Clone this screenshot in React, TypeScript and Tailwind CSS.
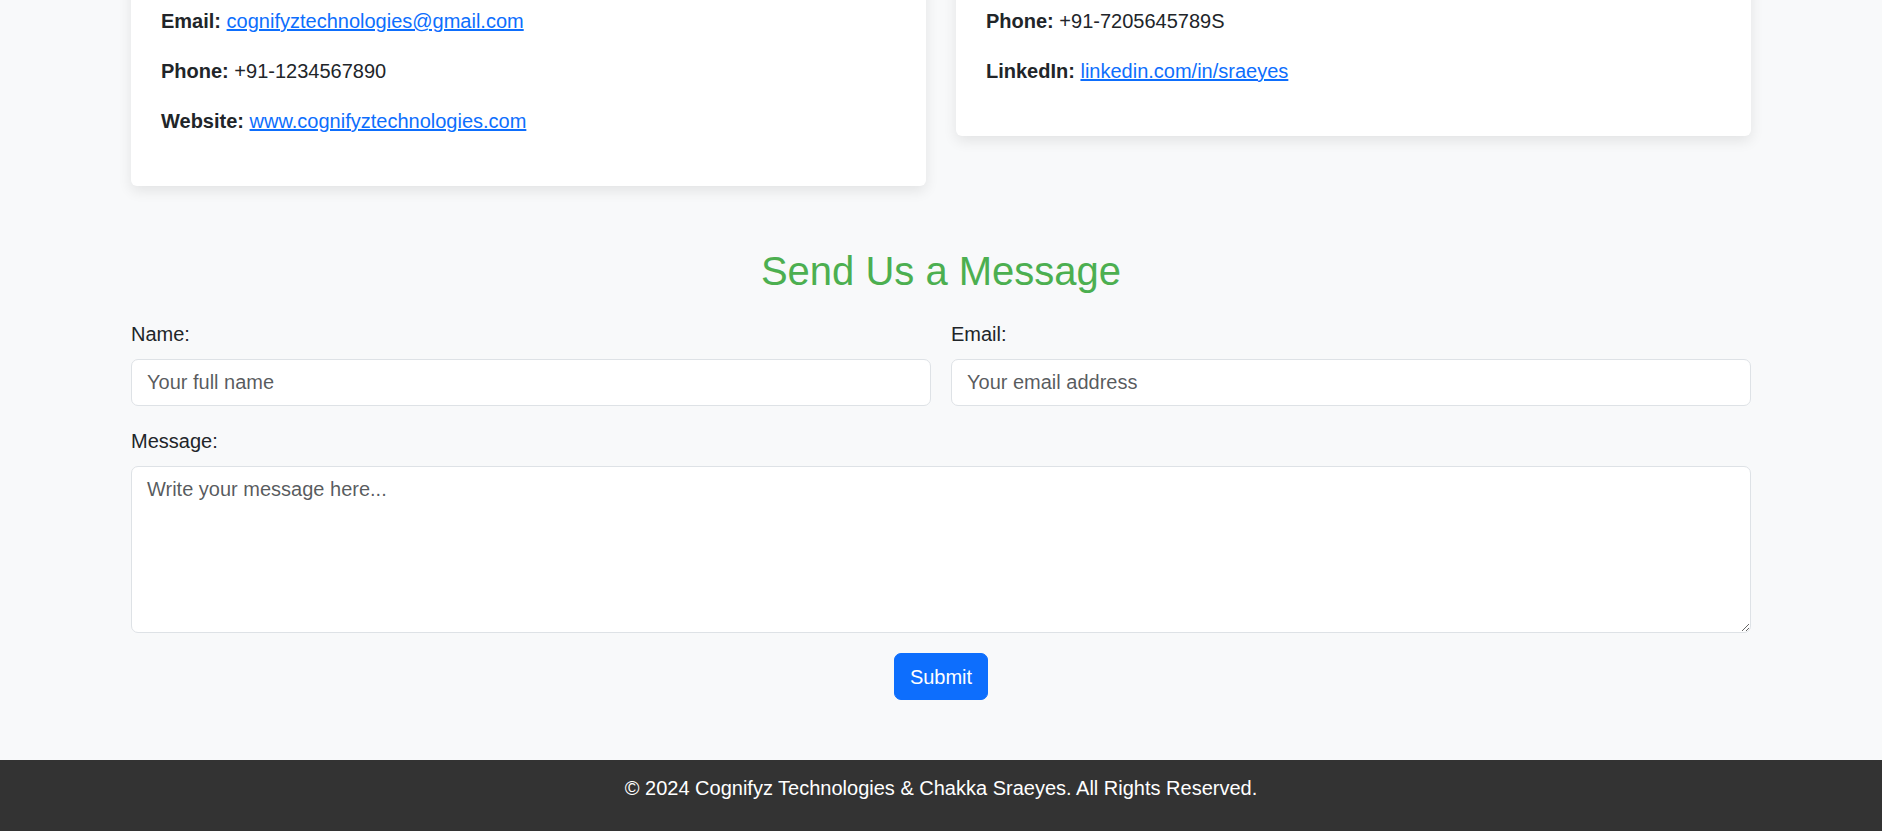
const Line = ({ label, children }: { label: string; children: React.ReactNode }) => (
  <p className="mb-[20px]">
    <strong className="font-bold">{label}</strong> {children}
  </p>
);

const Link = ({ href, children }: { href: string; children: React.ReactNode }) => (
  <a href={href} className="text-[#0d6efd] underline">{children}</a>
);

export default function App() {
  return (
    <div className="min-h-screen flex flex-col bg-[#f8f9fa] font-['Liberation_Sans',Arial,sans-serif] text-[20px] leading-[30px] text-[#212529]">
      <main className="w-[1650px] mx-auto px-[15px]">
        {/* Contact cards, scrolled partly out of view */}
        <div className="grid grid-cols-2 gap-[30px] items-start mt-[-24px]">
          <div className="bg-white rounded-[6px] p-[30px] shadow-[0_5px_14px_rgba(0,0,0,0.09)]">
            <Line label="Email:"><Link href="mailto:cognifyztechnologies@gmail.com">cognifyztechnologies@gmail.com</Link></Line>
            <Line label="Phone:">+91-1234567890</Line>
            <Line label="Website:"><Link href="#">www.cognifyztechnologies.com</Link></Line>
          </div>
          <div className="bg-white rounded-[6px] p-[30px] shadow-[0_5px_14px_rgba(0,0,0,0.09)]">
            <Line label="Phone:">+91-7205645789S</Line>
            <Line label="LinkedIn:"><Link href="#">linkedin.com/in/sraeyes</Link></Line>
          </div>
        </div>

        {/* Message form */}
        <section className="mt-[61px] pb-[60px]">
          <h2 className="text-center text-[40px] leading-[48px] text-[#4caf50] mb-[24px]">Send Us a Message</h2>
          <form className="flex flex-col" onSubmit={(e) => e.preventDefault()}>
            <div className="grid grid-cols-2 gap-x-[20px] mb-[20px]">
              <div>
                <label className="block mb-[10px]">Name:</label>
                <input
                  type="text"
                  placeholder="Your full name"
                  className="block w-full h-[47px] px-[15px] py-[7px] bg-white border border-[#dee2e6] rounded-[7px] outline-none placeholder:text-[#212529bf]"
                />
              </div>
              <div>
                <label className="block mb-[10px]">Email:</label>
                <input
                  type="email"
                  placeholder="Your email address"
                  className="block w-full h-[47px] px-[15px] py-[7px] bg-white border border-[#dee2e6] rounded-[7px] outline-none placeholder:text-[#212529bf]"
                />
              </div>
            </div>
            <div className="mb-[20px]">
              <label className="block mb-[10px]">Message:</label>
              <textarea
                rows={5}
                placeholder="Write your message here..."
                className="block w-full h-[167px] px-[15px] py-[7px] bg-white border border-[#dee2e6] rounded-[7px] outline-none resize-y placeholder:text-[#212529bf]"
              />
            </div>
            <div className="flex justify-center">
              <button type="submit" className="h-[47px] px-[15px] bg-[#0d6efd] text-white rounded-[7px] border border-[#0d6efd]">Submit</button>
            </div>
          </form>
        </section>
      </main>

      <footer className="flex-1 bg-[#333333] text-white text-center pt-[13px] pb-[28px]">
        © 2024 Cognifyz Technologies &amp; Chakka Sraeyes. All Rights Reserved.
      </footer>
    </div>
  );
}
